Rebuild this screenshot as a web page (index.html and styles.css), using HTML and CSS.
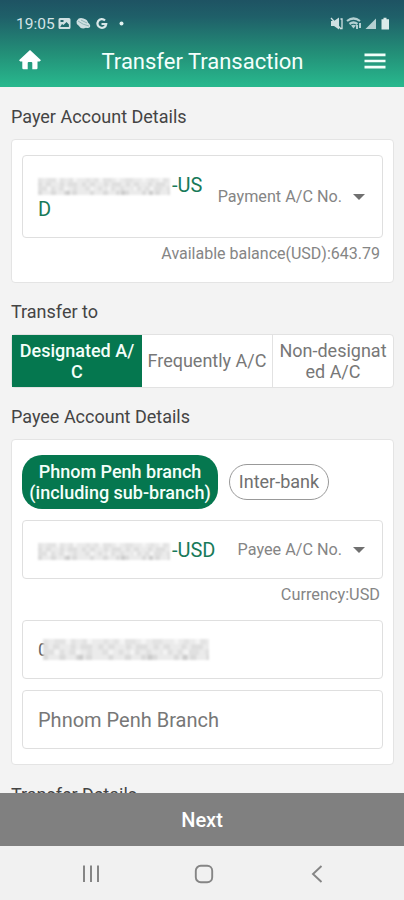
FILE: index.html
```html
<!DOCTYPE html>
<html lang="en">
<head>
<meta charset="utf-8">
<title>Transfer Transaction</title>
<link rel="stylesheet" href="styles.css">
</head>
<body>
<svg class="defs" width="0" height="0" aria-hidden="true">
  <symbol id="mask" viewBox="0 0 132 17" preserveAspectRatio="none">
    <rect width="132" height="17" fill="#ebebeb"/>
    <g fill="none" stroke-width="4.3">
      <path stroke="#e3e3e3" stroke-dasharray="4 5 9 4 4 5 8 9 4 4" d="M0 2.2H132"/>
      <path stroke="#dedede" stroke-dasharray="4 4 5 9 4 4 9 5" d="M0 6.4H132"/>
      <path stroke="#e0e0e0" stroke-dasharray="9 4 4 4 9 5 4 8" d="M0 10.6H132"/>
      <path stroke="#dadada" stroke-dasharray="4 9 5 8 4 4 5 13" d="M0 14.8H132"/>
      <path stroke="#cbcbcb" stroke-dasharray="4 51 4 24" d="M28 14.8H132"/>
      <path stroke="#f4f4f4" stroke-dasharray="4 13 4 22" d="M9 10.6H132M18 2.2H132"/>
    </g>
  </symbol>
</svg>
<div class="screen">
  <header class="header">
    <div class="status">
      <span class="clock">19:05</span>
      <svg class="status-left" width="70" height="14" viewBox="0 0 70 14">
        <path fill="#cfe0e2" fill-rule="evenodd" d="M2 1h9q1.500 0 1.500 1.500v8q0 1.500-1.500 1.500H2Q.5 12 .5 10.500v-8Q.5 1 2 1zM2.200 10h8.700V7.500L8.500 5 5.500 8 4 7zM2.500 3v2h3V3z"/>
        <path fill="#cfe0e2" d="M19 3.500q2-3.500 6.500-2 4 1 4.500 4 3 2.500 2 4.500-1 1.500-4 .8-5 2-7.500-2.300-2.500-2-2-4z"/>
        <path fill="none" stroke="#8fb4b6" d="M20 4q5 4 11 5M23 3l6 3"/>
        <path fill="none" stroke="#d9e8e9" stroke-width="2.200" d="M47 3.400A4.400 4.400 0 1 0 48.200 7H43.500"/>
        <circle cx="63.500" cy="6.500" r="2" fill="#e2f2f0"/>
      </svg>
      <svg class="status-right" width="60" height="14" viewBox="0 0 60 14">
        <path fill="#cfe0e2" d="M1 4h3l5-3.500v12L4 9H1z"/>
        <path stroke="#cfe0e2" stroke-width="1.300" fill="none" d="M1 1l10 11M10.500 2h1.500v9.500h-1.500"/>
        <path stroke="#b4d0d2" stroke-width="2.200" fill="none" d="M17 4q6.500-5 13 0M19.500 7q4-3 8 0"/>
        <path fill="#b4d0d2" d="M21 8.500q2.500-1.500 5 0L23.500 11.500zM26 8h2v4h-2zM29 6h2v5h-2z"/>
        <path fill="#b4d0d2" d="M46 1.500V12H35.500z"/>
        <path fill="#dcebea" d="M53.500.8h3V2.200H59V12.500h-7.500V2.200h2z"/>
      </svg>
    </div>
    <div class="bar">
      <svg class="home" width="22" height="20" viewBox="0 0 22 20"><path fill="#fff" d="M11 0L22 10.200 20.500 11.500H18.500V18q0 1.200-1.200 1.200H13.300V13q0-1-1-1H9.700q-1 0-1 1v6.200H4.500Q3.300 19.200 3.300 18V11.500H1.300L0 10.200z"/></svg>
      <h1>Transfer Transaction</h1>
      <svg class="menu" width="22" height="16" viewBox="0 0 22 16"><path stroke="#f2fffa" stroke-width="2.700" d="M.5 1.800H21.500M.5 8H21.500M.5 14.200H21.500"/></svg>
    </div>
  </header>

  <main class="content">
    <h2 class="t-payer">Payer Account Details</h2>
    <section class="card">
      <div class="field tall">
        <div class="account"><svg class="mask"><use href="#mask"/></svg>-US<br>D</div>
        <span class="label">Payment A/C No.</span><i class="caret"></i>
      </div>
      <p class="note balance">Available balance(USD):643.79</p>
    </section>

    <h2 class="t-to">Transfer to</h2>
    <div class="tabs">
      <div class="tab active">Designated A/<br>C</div>
      <div class="tab">Frequently A/C</div>
      <div class="tab">Non-designat<br>ed A/C</div>
    </div>

    <h2 class="t-payee">Payee Account Details</h2>
    <section class="card payee">
      <div class="pills">
        <div class="pill selected">Phnom Penh branch<br>(including sub-branch)</div>
        <div class="pill">Inter-bank</div>
      </div>
      <div class="field">
        <div class="account"><svg class="mask"><use href="#mask"/></svg>-USD</div>
        <span class="label">Payee A/C No.</span><i class="caret"></i>
      </div>
      <p class="note currency">Currency:USD</p>
      <div class="field number"><span class="digit">0</span><svg class="mask long"><use href="#mask"/></svg></div>
      <div class="field branch"><span>Phnom Penh Branch</span></div>
    </section>
    <h2 class="t-details">Transfer Details</h2>
  </main>

  <div class="next">Next</div>
  <nav class="nav">
    <svg width="20" height="20" viewBox="0 0 20 20"><path stroke="#858585" stroke-width="2" d="M3 1.500V18M10 1.500V18M17 1.500V18"/></svg>
    <svg width="20" height="20" viewBox="0 0 20 20"><rect x="1.800" y="1.800" width="16.400" height="16.400" rx="5" fill="none" stroke="#858585" stroke-width="1.900"/></svg>
    <svg width="20" height="20" viewBox="0 0 20 20"><path fill="none" stroke="#858585" stroke-width="1.900" d="M14.500 2L6 10l8.500 8"/></svg>
  </nav>
</div>
</body>
</html>
```
FILE: styles.css
```css
* { box-sizing: border-box; }
body { margin: 0; font-family: Roboto, "Liberation Sans", sans-serif; }
h1, h2, p { margin: 0; font-weight: 400; white-space: nowrap; }
svg { display: block; flex: none; }
.defs { position: absolute; }
.screen { width: 404px; height: 900px; display: flex; flex-direction: column; overflow: hidden; background: #f3f3f3; }

.header { height: 87px; flex: none; background: linear-gradient(#1e5363 0, #1f6069 20%, #239078 62%, #28b78d 98%); }
.status { height: 36px; padding: 11px 14px 0 16px; display: flex; align-items: center; }
.clock { width: 38px; font-size: 15.500px; line-height: 24px; color: #d5e3e6; }
.status-left { margin-left: 4px; }
.status-right { margin-left: auto; margin-right: 0; }
.bar { height: 51px; padding: 0 18px 0 19px; display: flex; align-items: center; justify-content: space-between; }
.home { margin-top: -3px; }
.menu { margin-top: -2px; }
h1 { font-size: 22px; line-height: 28px; color: #f4fffc; }

.content { height: 706px; flex: none; padding: 0 10px 0 11px; overflow: hidden; }
h2 { font-size: 18px; line-height: 24px; color: #444; }
.t-payer { margin-top: 18px; }
.card { height: 144px; margin-top: 10px; padding: 15px 10px 0; border: 1px solid #e4e4e4; border-radius: 4px; background: #fff; }
.field { height: 59px; padding: 0 17px 0 15px; display: flex; align-items: center; border: 1px solid #dfdfdf; border-radius: 4px; color: #777; font-size: 18px; }
.tall { height: 83px; }
.account { flex: 1; font-size: 20px; line-height: 24px; color: #187a59; white-space: nowrap; }
.mask { display: inline-block; width: 132px; height: 17px; margin-right: 2px; vertical-align: -3px; filter: blur(.8px); }
.label { margin-right: 11px; font-size: 16.200px; color: #858585; white-space: nowrap; }
.caret { width: 0; height: 0; border: 6px solid transparent; border-top: 6px solid #707070; border-bottom: 0; }
.note { font-size: 16px; line-height: 20px; text-align: right; color: #858585; padding-right: 3px; }
.balance { margin-top: 6px; }

.t-to { margin-top: 17px; }
.tabs { height: 54px; margin-top: 10px; display: grid; grid-template-columns: 130px 130px 1fr; border: 1px solid #e2e2e2; border-radius: 4px; background: #fff; }
.tab { display: flex; align-items: center; justify-content: center; text-align: center; font-size: 18px; line-height: 21.500px; color: #777; white-space: nowrap; }
.tab + .tab + .tab { border-left: 1px solid #e2e2e2; }
.active { background: #05774f; color: #f4fffa; font-weight: 500; }

.t-payee { margin-top: 17px; }
.payee { height: 326px; }
.pills { height: 54px; display: flex; align-items: center; gap: 11px; }
.pill { width: 100px; height: 36px; border: 1px solid #999; border-radius: 27px; display: flex; align-items: center; justify-content: center; text-align: center; font-size: 18px; line-height: 21.500px; color: #707070; white-space: nowrap; }
.selected { width: 196px; height: 54px; border: 0; background: #05774f; color: #f4fffa; font-weight: 500; border-radius: 20px; }
.pills + .field { margin-top: 11px; }
.currency { margin-top: 6px; font-size: 16.300px; }
.number { margin-top: 15px; }
.digit { width: 5px; white-space: nowrap; color: #666; }
.long { position: relative; width: 166px; height: 21px; margin: 0; }
.branch { margin-top: 11px; font-size: 20px; }
.t-details { margin-top: 18px; }

.next { height: 53px; flex: none; display: flex; align-items: center; justify-content: center; background: #808080; color: #fff; font-size: 20px; font-weight: 500; }
.nav { height: 54px; display: flex; align-items: center; justify-content: space-between; padding: 2px 77px 0 81px; background: #f1f1f1; }
```
